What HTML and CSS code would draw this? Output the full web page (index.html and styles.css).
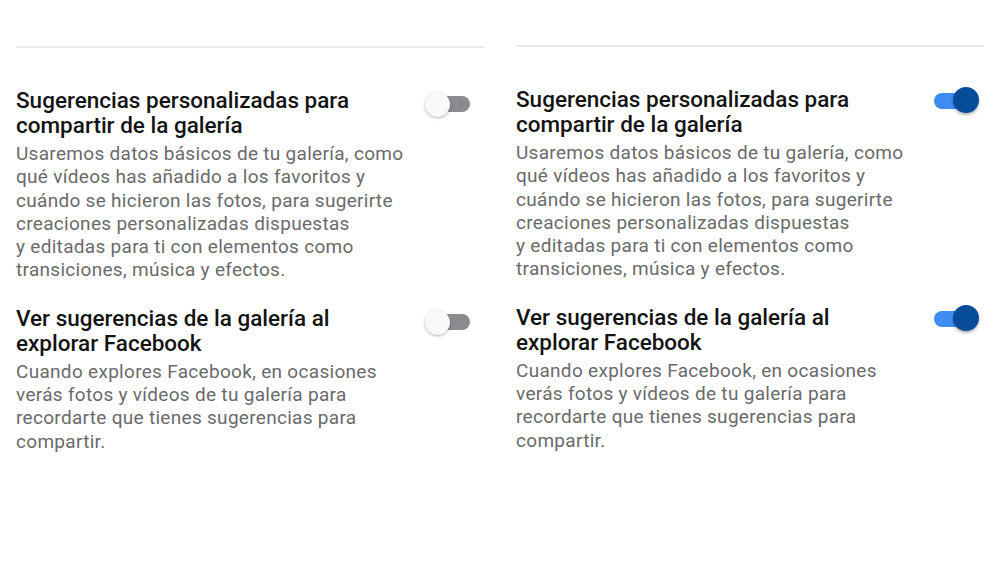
FILE: index.html
```html
<!DOCTYPE html>
<html lang="es">
<head>
<meta charset="utf-8">
<link rel="stylesheet" href="styles.css">
</head>
<body>
<div class="page">
  <section class="panel panel--off">
    <hr class="divider">
    <div class="setting">
      <div class="text">
        <h2 class="title">Sugerencias personalizadas para<br>compartir de la galería</h2>
        <p class="desc">Usaremos datos básicos de tu galería, como<br>qué vídeos has añadido a los favoritos y<br>cuándo se hicieron las fotos, para sugerirte<br>creaciones personalizadas dispuestas<br>y editadas para ti con elementos como<br>transiciones, música y efectos.</p>
      </div>
      <div class="switch"><span class="track"></span><span class="knob"></span></div>
    </div>
    <div class="setting">
      <div class="text">
        <h2 class="title">Ver sugerencias de la galería al<br>explorar Facebook</h2>
        <p class="desc">Cuando explores Facebook, en ocasiones<br>verás fotos y vídeos de tu galería para<br>recordarte que tienes sugerencias para<br>compartir.</p>
      </div>
      <div class="switch"><span class="track"></span><span class="knob"></span></div>
    </div>
  </section>
  <section class="panel panel--on">
    <hr class="divider">
    <div class="setting">
      <div class="text">
        <h2 class="title">Sugerencias personalizadas para<br>compartir de la galería</h2>
        <p class="desc">Usaremos datos básicos de tu galería, como<br>qué vídeos has añadido a los favoritos y<br>cuándo se hicieron las fotos, para sugerirte<br>creaciones personalizadas dispuestas<br>y editadas para ti con elementos como<br>transiciones, música y efectos.</p>
      </div>
      <div class="switch"><span class="track"></span><span class="knob"></span></div>
    </div>
    <div class="setting">
      <div class="text">
        <h2 class="title">Ver sugerencias de la galería al<br>explorar Facebook</h2>
        <p class="desc">Cuando explores Facebook, en ocasiones<br>verás fotos y vídeos de tu galería para<br>recordarte que tienes sugerencias para<br>compartir.</p>
      </div>
      <div class="switch"><span class="track"></span><span class="knob"></span></div>
    </div>
  </section>
</div>
</body>
</html>
```
FILE: styles.css
```css
* { box-sizing: border-box; }
html, body { margin: 0; padding: 0; background: #fff; }
body { font-family: Roboto, "Noto Sans", sans-serif; }
.page { display: flex; width: 1000px; height: 567px; }
.panel { width: 500px; padding: 45px 16px 0; display: flex; flex-direction: column; }
.panel--off { padding-top: 46px; }
.divider { margin: 0 0 40px; border: 0; height: 2px; background: #e9eaec; }
.setting { display: flex; align-items: flex-start; justify-content: space-between; margin-bottom: 24px; }
.text { flex: 1; white-space: nowrap; }
.title { margin: 0; font-size: 22.5px; line-height: 25px; font-weight: 500; color: #141414; }
.desc { margin: 4px 0 0; font-size: 19px; line-height: 23.3px; letter-spacing: 0.3px; color: #6a6a6b; }
.switch { position: relative; width: 45px; height: 26px; margin-top: 3px; flex: none; }
.track { position: absolute; top: 5px; height: 16px; width: 34px; border-radius: 8px; }
.knob { position: absolute; top: 0; width: 26px; height: 26px; border-radius: 50%; }
.panel--off .switch { margin-right: 14px; margin-top: 3px; }
.panel--off .track { right: 0; background: #8a8b8e; }
.panel--off .knob { left: 0; top: 1px; width: 25px; height: 25px; background: #f9f9f9; box-shadow: 0 1px 3px rgba(0,0,0,0.3); }
.panel--on .switch { margin-right: 5px; margin-top: 0; }
.panel--on .track { left: 0; top: 6px; background: #3f8cf4; }
.panel--on .knob { right: 0; background: #064c99; box-shadow: 0 2px 3px rgba(0,0,0,0.3); }
```
